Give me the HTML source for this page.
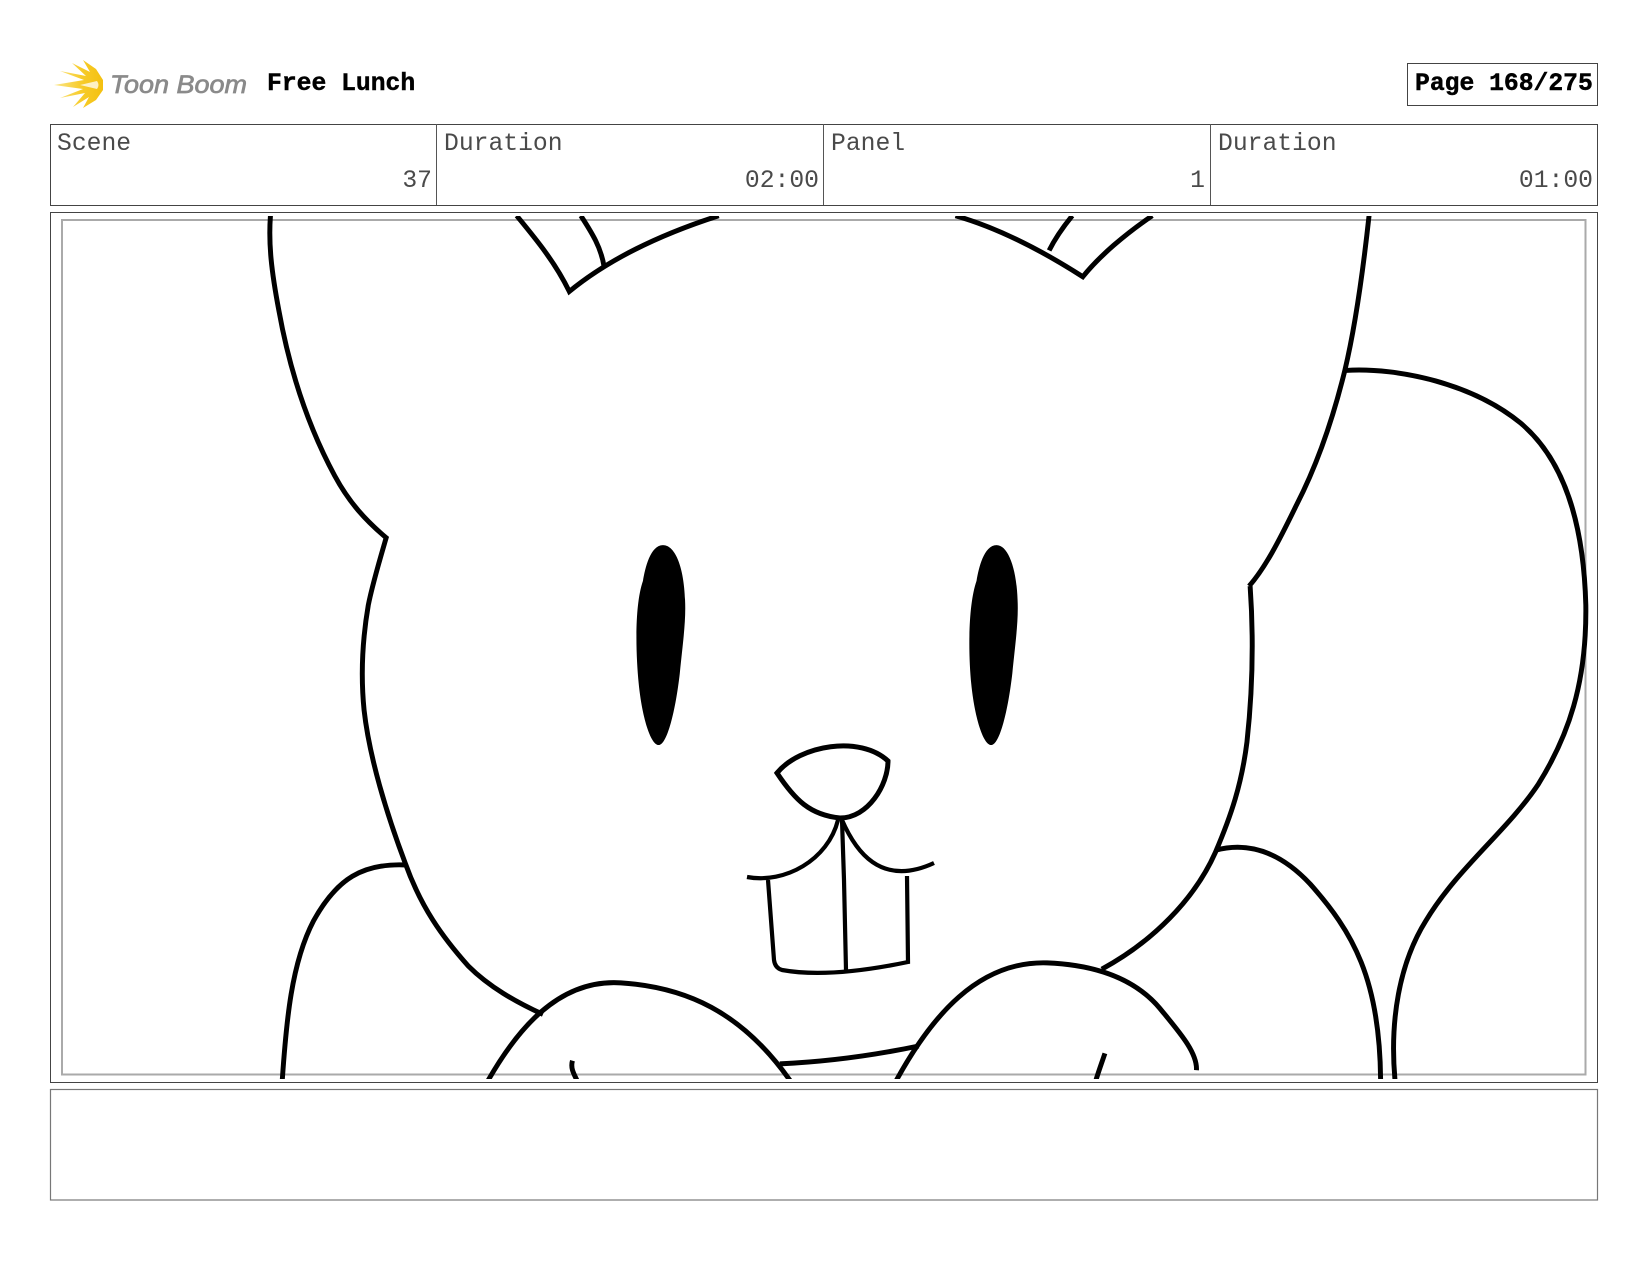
<!DOCTYPE html>
<html><head><meta charset="utf-8"><title>Free Lunch</title>
<style>html,body{margin:0;padding:0;background:#fff;width:1650px;height:1275px;overflow:hidden}svg{display:block}
text{font-family:"Liberation Mono",monospace}
.l{font-size:24.7px;fill:#4a4a4a}.b{font-size:24.7px;font-weight:bold;fill:#000;stroke:#000;stroke-width:.45}</style></head><body>
<svg width="1650" height="1275" viewBox="0 0 1650 1275" xmlns="http://www.w3.org/2000/svg">
<defs><clipPath id="c"><rect x="62" y="216" width="1528" height="863"/></clipPath>
<linearGradient id="g" x1="0" x2="1"><stop offset="0" stop-color="#fbe68a"/><stop offset=".55" stop-color="#f7cc2a"/><stop offset="1" stop-color="#f4c010"/></linearGradient></defs>
<polygon fill="url(#g)" points="54,85 84,80 60,71 86,76 72,63 90,72 83,60 96,69 103,80 103,90 96,100 83,108 89,97 73,107 85,93 60,98 83,89"/>
<path d="M80,85 L97,81 Q100,85 97,89 Z" fill="#fff" opacity=".75"/>
<text x="110" y="93" textLength="137" lengthAdjust="spacingAndGlyphs" style="font-family:'Liberation Sans',sans-serif;font-style:italic;font-size:25px;fill:#8a8a8a;stroke:#8a8a8a;stroke-width:.7">Toon Boom</text>
<text x="267" y="90" class="b">Free Lunch</text>
<rect x="1407.5" y="63.5" width="190" height="42" fill="none" stroke="#444"/>
<text x="1415" y="90" class="b">Page 168/275</text>
<rect x="50.5" y="124.5" width="1547" height="81" fill="none" stroke="#444"/>
<path d="M436.5 124v81M823.5 124v81M1210.5 124v81" stroke="#555" fill="none"/>
<text x="57" y="150" class="l">Scene</text><text x="444" y="150" class="l">Duration</text><text x="831" y="150" class="l">Panel</text><text x="1218" y="150" class="l">Duration</text>
<text x="432" y="187" class="l" text-anchor="end">37</text><text x="819" y="187" class="l" text-anchor="end">02:00</text><text x="1205" y="187" class="l" text-anchor="end">1</text><text x="1593" y="187" class="l" text-anchor="end">01:00</text>
<rect x="50.5" y="212.5" width="1547" height="870" fill="none" stroke="#444"/>
<rect x="62" y="220" width="1523.5" height="854.5" fill="none" stroke="#aaa" stroke-width="2"/>
<rect x="50.5" y="1089.5" width="1547" height="110.5" fill="none" stroke="#777" stroke-width="1.2"/>
<g clip-path="url(#c)">
<g transform="scale(1.0523)" fill="none" stroke="#000" stroke-width="4.7">
<path d="M257,205 C255,232 258,258 265,295 C274,345 290,400 318,452 C332,478 348,495 367,511 C360,535 354,555 350,575 C344,610 343,645 346,675 C351,720 368,775 385,820 C400,862 420,890 445,918 C465,938 490,952 516,964"/>
<path d="M491,205 C510,228 528,250 541,277 C580,245 630,222 683,205"/>
<path d="M552,205 C563,222 571,235 574,253"/>
<path d="M908,205 C950,217 990,238 1029,263 C1045,243 1070,222 1095,205"/>
<path d="M1019,205 C1010,216 1002,228 997,238"/>
<path d="M1301,205 C1295,260 1288,310 1278,352 C1265,405 1250,445 1232,480 C1215,515 1202,540 1187,557"/>
<path d="M1188,557 C1191,600 1191,650 1185,705 C1180,745 1170,775 1155,810 C1135,855 1095,895 1047,921"/>
<path d="M1279,352 C1330,349 1400,365 1445,402 C1488,438 1505,500 1507,575 C1508,650 1490,700 1462,745 C1432,790 1385,825 1355,875 C1330,915 1320,970 1326,1030"/>
<path d="M1155,808 C1185,800 1215,808 1245,840 C1285,885 1312,930 1312,1030"/>
<path d="M268,1030 C272,970 277,915 298,875 C320,835 345,820 386,822"/>
<path d="M462,1030 C490,980 530,930 590,934 C650,938 705,960 753,1030"/>
<path d="M850,1030 C885,965 930,913 995,915 C1045,917 1080,932 1102,958 C1120,980 1138,1000 1137,1017"/>
<path d="M741,1011 C785,1009 830,1003 873,994"/>
<path d="M544,1008 C542,1015 545,1020 549,1028"/>
<path d="M1050,1001 C1047,1010 1044,1018 1041,1028"/>
<path fill="#000" stroke="none" d="M630,518 C618,518 613,540 611,552 C603,575 604,620 607,650 C610,680 618,708 626,708 C634,708 642,675 646,640 C649,610 652,590 651,570 C650,540 642,518 630,518Z"/>
<path fill="#000" stroke="none" d="M947,518 C935,518 930,540 928,552 C920,575 920,620 923,650 C926,680 934,708 942,708 C950,708 958,675 962,640 C965,610 968,590 967,570 C966,540 958,518 947,518Z"/>
</g>
<g fill="none" stroke="#000">
<path stroke-width="5" d="M777,773 C800,745 860,735 888,761 C888,785 868,818 840,818 C810,815 795,800 777,773Z"/>
<path stroke-width="4.2" d="M747,877 C785,884 828,860 838,820"/>
<path stroke-width="4.2" d="M842,820 C855,850 880,888 934,863"/>
<path stroke-width="4.2" d="M842,820 L844,880 L846,970"/>
<path stroke-width="4.2" d="M768,880 L774,960 Q775,968 782,970 C815,976 860,972 908,962 L907,876"/>
</g>
</g>
</svg>
</body></html>
